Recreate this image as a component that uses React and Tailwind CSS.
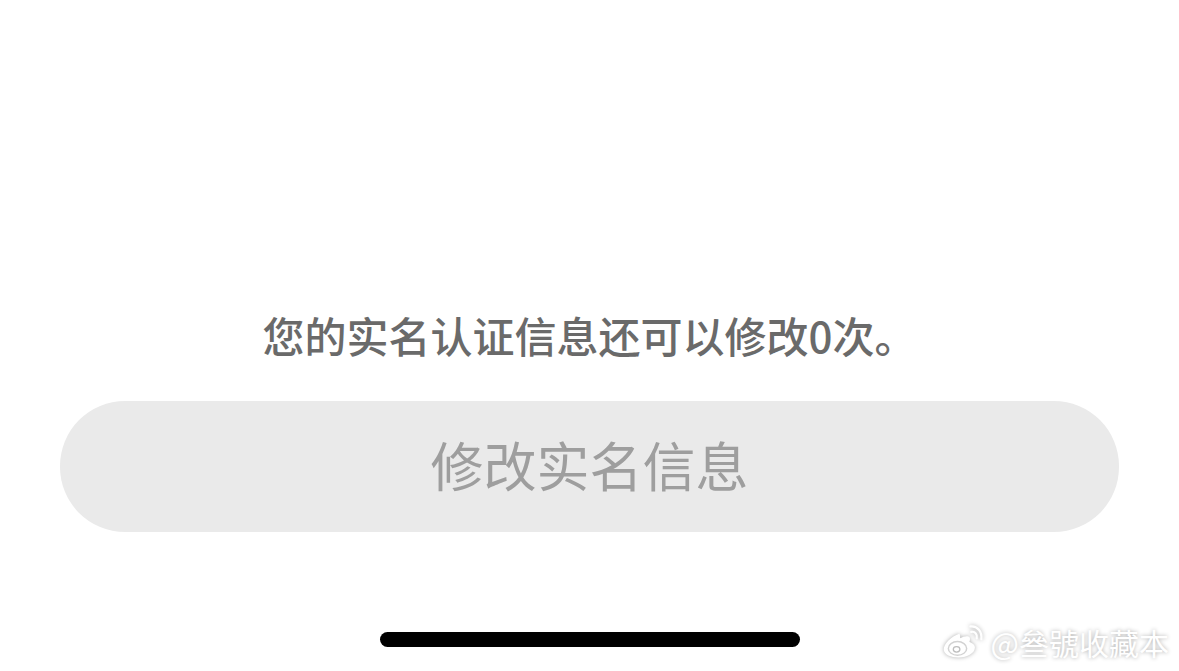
export default function App() {
  const cjk = { fontFamily: '"Noto Sans CJK SC", "Liberation Sans", sans-serif' };
  return (
    <div className="relative h-[671px] w-full overflow-hidden bg-white flex flex-col items-center" style={cjk}>
      <p className="mt-[304px] h-[62px] leading-[62px] text-[42px] font-medium text-[#6a6a6a] whitespace-nowrap">
        您的实名认证信息还可以修改0次。
      </p>
      <button className="mt-[35px] w-[1059px] h-[131px] rounded-[65px] bg-[#eaeaea] text-[53px] text-[#9e9e9e] flex items-center justify-center pb-[3px]">
        修改实名信息
      </button>
      <div className="mt-[100px] w-[420px] h-[15px] rounded-full bg-black" />
      <div className="absolute right-[10px] bottom-[10px] flex items-center gap-[6px] text-white text-[30px] leading-[36px] [text-shadow:0_0_4px_rgba(0,0,0,0.32)]">
        <svg width="44" height="38" viewBox="0 0 48 38" fill="none" className="[filter:drop-shadow(0_0_2px_rgba(0,0,0,0.32))]">
          <path d="M20 10C11 13 3 21 3 27c0 6 8 9 16 9 10 0 18-5 18-11 0-4-4-5-6-6 1-3 1-5-1-6-2-1-6 0-9 2 0-3-1-6-1-5z" fill="white" />
          <ellipse cx="18" cy="26" rx="10" ry="7.5" fill="none" stroke="#d2d2d2" strokeWidth="1.6" />
          <ellipse cx="17" cy="27" rx="3.6" ry="3" fill="none" stroke="#bdbdbd" strokeWidth="1.4" />
          <path d="M33 8c4-1 7 3 6 7" stroke="white" strokeWidth="2.4" strokeLinecap="round" />
          <path d="M32 2c8-1 13 6 12 14" stroke="white" strokeWidth="2.4" strokeLinecap="round" />
        </svg>
        <span>@叄號收藏本</span>
      </div>
    </div>
  );
}
